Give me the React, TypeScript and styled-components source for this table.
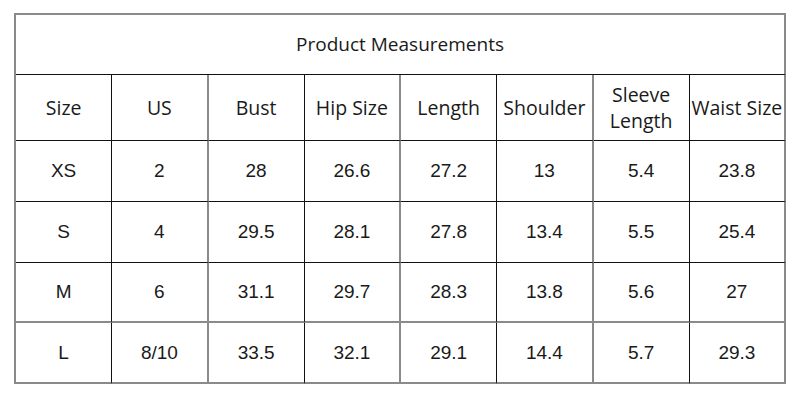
import styled, { createGlobalStyle } from "styled-components";

const GlobalStyle = createGlobalStyle`
  html, body {
    margin: 0;
    padding: 0;
    background: #ffffff;
  }
`;

const columns = [
  "Size",
  "US",
  "Bust",
  "Hip Size",
  "Length",
  "Shoulder",
  "Sleeve Length",
  "Waist Size",
];

const rows = [
  ["XS", "2", "28", "26.6", "27.2", "13", "5.4", "23.8"],
  ["S", "4", "29.5", "28.1", "27.8", "13.4", "5.5", "25.4"],
  ["M", "6", "31.1", "29.7", "28.3", "13.8", "5.6", "27"],
  ["L", "8/10", "33.5", "32.1", "29.1", "14.4", "5.7", "29.3"],
];

// bottom border colour of each row below the header
const rowLines = ["#111", "#111", "#8a8a8a", "#8a8a8a", "#8a8a8a"];

const App = () => {
  return (
    <>
      <GlobalStyle />
      <Page>
        <Chart>
          <Title>Product Measurements</Title>
          {columns.map((label, i) => (
            <HeadCell key={label} $dark={i % 2 === 0} $line="#111">
              <span>{label}</span>
            </HeadCell>
          ))}
          {rows.map((row, r) =>
            row.map((value, i) => (
              <Cell key={`${r}-${i}`} $dark={i % 2 === 0} $line={rowLines[r]}>
                {value}
              </Cell>
            ))
          )}
        </Chart>
      </Page>
    </>
  );
};

export default App;

const Page = styled.div`
  padding: 13px 14px;
  width: 800px;
  height: 400px;
  box-sizing: border-box;
`;

const Chart = styled.div`
  display: grid;
  grid-template-columns: repeat(8, 1fr);
  grid-template-rows: 60px 66px 61px 61px 60px 61px;
  width: 772px;
  box-sizing: border-box;
  border-left: 2px solid #8a8a8a;
  border-top: 2px solid #8a8a8a;
  color: #1a1a1a;
`;

const Title = styled.div`
  grid-column: 1 / -1;
  display: flex;
  align-items: center;
  justify-content: center;
  font-family: "Open Sans", "Noto Sans", sans-serif;
  font-size: 19px;
  border-right: 2px solid #8a8a8a;
  border-bottom: 1.5px solid #111;
  padding-bottom: 2px;
`;

const Cell = styled.div<{ $dark: boolean; $line: string }>`
  display: flex;
  align-items: center;
  justify-content: center;
  text-align: center;
  box-sizing: border-box;
  font-family: "Liberation Sans", Arial, sans-serif;
  font-size: 19px;
  border-right: ${(p) => (p.$dark ? "1.5px solid #111" : "2px solid #8a8a8a")};
  border-bottom: ${(p) =>
    p.$line === "#111" ? "1.5px solid #111" : `2px solid ${p.$line}`};
`;

const HeadCell = styled(Cell)`
  font-family: "Open Sans", "Noto Sans", sans-serif;
  font-size: 19.5px;
  line-height: 26px;
  span {
    display: block;
    padding: 0 1px;
  }
`;
